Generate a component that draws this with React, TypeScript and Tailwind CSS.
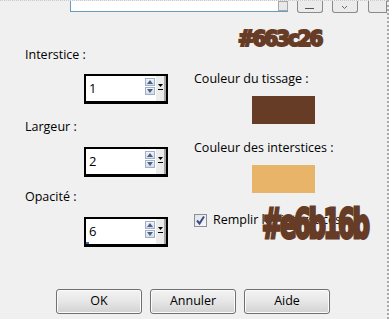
import React from "react";

function SpinBtn({ up }: { up: boolean }) {
  return (
    <div className="w-[10px] h-[8px] border border-[#9fb0c8] bg-gradient-to-b from-[#f4f6fa] to-[#d3dbe8] flex items-center justify-center">
      <svg width="6" height="4" viewBox="0 0 6 4">
        {up ? (
          <polygon points="0,4 6,4 3,0" fill="#4c5f86" />
        ) : (
          <polygon points="0,0 6,0 3,4" fill="#4c5f86" />
        )}
      </svg>
    </div>
  );
}

function Spinner({ v, dot }: { v: string; dot?: boolean }) {
  return (
    <div className="ml-[59px] w-[84px] h-[30px] border-2 border-b-[3px] border-black bg-white flex relative">
      <div className="flex-1 pl-[3px] pt-[4px] leading-[16px] text-[13px]">{v}</div>
      <div className="flex flex-col mt-[2px] gap-[1px] mr-[1px]">
        <SpinBtn up />
        <SpinBtn up={false} />
      </div>
      <div className="w-[10px] bg-[#ececec] border-r-2 border-[#a5a5a5] flex flex-col items-center pt-[8px]">
        <svg width="5" height="6" viewBox="0 0 5 6">
          <polygon points="0,0 5,0 2.5,3" fill="#000" />
          <rect x="0" y="5" width="5" height="1" fill="#000" />
        </svg>
      </div>
      {dot && <div className="absolute left-0 bottom-0 w-[3px] h-[2px] bg-[#3b6fb6]" />}
    </div>
  );
}

function DlgButton({ label }: { label: string }) {
  return (
    <div className="w-[86px] h-[25px] rounded-[3px] border border-[#707070] bg-gradient-to-b from-[#f3f3f3] via-[#e6e6e6] to-[#d2d2d2] flex items-center justify-center shadow-[inset_0_0_0_1px_#fbfbfb]">
      {label}
    </div>
  );
}

export default function App() {
  return (
    <div
      className="w-[389px] h-[319px] bg-[#f0f0f0] relative overflow-hidden flex flex-col text-[12.5px] text-black border-r-2 border-dotted border-[#a8a8a8]"
      style={{ fontFamily: "'Open Sans', 'Noto Sans', sans-serif" }}
    >
      {/* top strip */}
      <div className="h-[12px] flex border-t border-dotted border-[#c8c8c8]">
        <div className="w-[72px]" />
        <div className="w-[225px] h-[11px] bg-white border-l border-b border-[#6a9cbf] flex justify-end">
          <div className="w-[10px] h-[10px] border border-[#a8a8a8] bg-[#e8e8e8]" />
        </div>
        <div className="w-[9px]" />
        <div className="w-[27px] h-[12px] border border-t-0 border-[#8a8a8a] rounded-b-[3px] bg-[#ebebeb] flex items-end justify-center pb-[3px]">
          <div className="w-[9px] h-[1px] bg-[#555]" />
        </div>
        <div className="w-[9px]" />
        <div className="w-[27px] h-[12px] border border-t-0 border-[#8a8a8a] rounded-b-[3px] bg-[#ebebeb] flex items-end justify-center pb-[3px]">
          <svg width="5" height="3" viewBox="0 0 5 3">
            <polyline points="0,0 2.5,2.5 5,0" fill="none" stroke="#666" strokeWidth="1" />
          </svg>
        </div>
        <div className="w-[10px]" />
        <div className="w-[20px] h-[12px] border border-t-0 border-[#8a8a8a] rounded-bl-[3px] bg-[#ebebeb]" />
      </div>

      {/* content */}
      <div className="flex">
        <div className="w-[194px] pl-[25px] flex flex-col">
          <div className="mt-[35px] leading-[16px]">Interstice :</div>
          <div className="mt-[11px]">
            <Spinner v="1" />
          </div>
          <div className="mt-[15px] leading-[16px]">Largeur :</div>
          <div className="mt-[12px]">
            <Spinner v="2" />
          </div>
          <div className="mt-[12px] leading-[16px]">Opacité :</div>
          <div className="mt-[12px]">
            <Spinner v="6" dot />
          </div>
        </div>
        <div className="flex-1 flex flex-col">
          <div className="mt-[59px] leading-[16px]">Couleur du tissage :</div>
          <div className="mt-[9px] ml-[58px] w-[63px] h-[28px] bg-[#663c26]" />
          <div className="mt-[16px] leading-[16px]">Couleur des interstices :</div>
          <div className="mt-[9px] ml-[58px] w-[63px] h-[28px] bg-[#e8b46a]" />
          <div className="mt-[19px] flex items-center gap-[6px] leading-[16px]">
            <div className="w-[13px] h-[13px] border border-[#8e8f8f] bg-gradient-to-br from-[#dfe3ea] to-[#f7f8fa] flex items-center justify-center">
              <svg width="11" height="11" viewBox="0 0 11 11">
                <polyline points="2,5.5 4.5,8.5 9,1.5" fill="none" stroke="#3a4d86" strokeWidth="2" />
              </svg>
            </div>
            <span>Remplir les interstices</span>
          </div>
        </div>
      </div>

      {/* buttons */}
      <div className="mt-auto mb-[5px] pl-[56px] flex gap-[8px]">
        <DlgButton label="OK" />
        <DlgButton label="Annuler" />
        <DlgButton label="Aide" />
      </div>

      {/* annotations */}
      <div
        className="absolute left-[238px] top-[28px] text-[22px] leading-none font-bold tracking-[-2px] text-[#663c26] [-webkit-text-stroke:2px_#663c26]"
        style={{ fontFamily: "'DejaVu Sans Condensed', 'DejaVu Sans', sans-serif" }}
      >
        #663c26
      </div>
      <div
        className="absolute left-[262px] top-[203px] text-[27px] leading-none font-bold tracking-[-2.4px] text-[#663c26] origin-top scale-y-150 [-webkit-text-stroke:2px_#663c26]"
        style={{ fontFamily: "'DejaVu Sans Condensed', 'DejaVu Sans', sans-serif" }}
      >
        #e6b16b
      </div>
    </div>
  );
}
